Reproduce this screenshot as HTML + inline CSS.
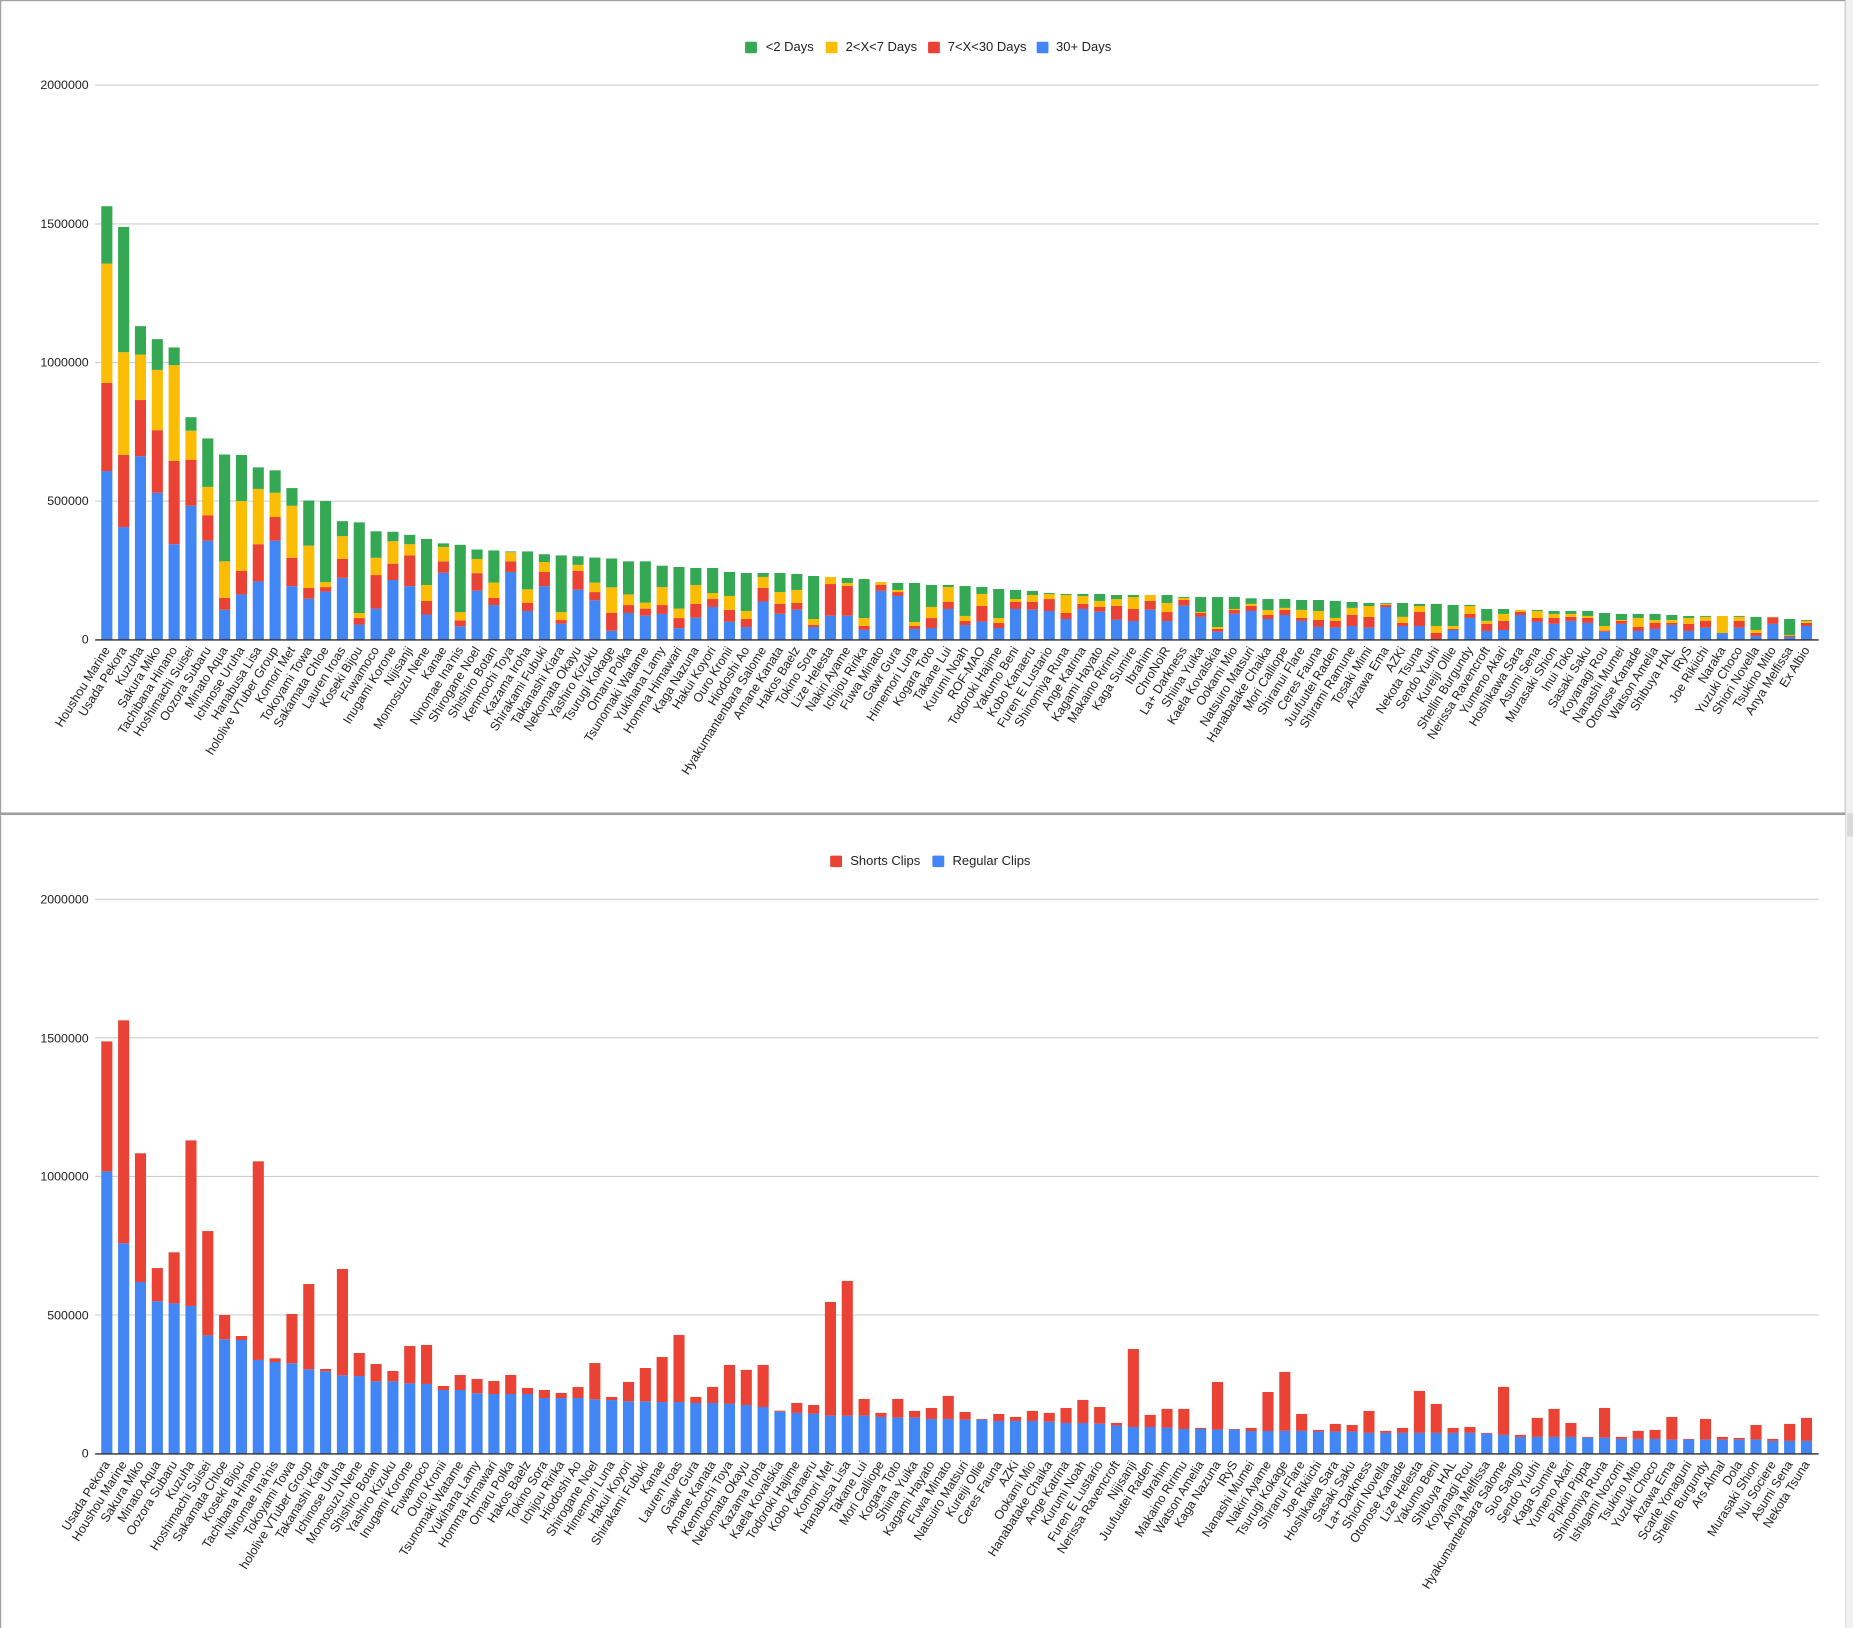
<!DOCTYPE html>
<html><head><meta charset="utf-8">
<style>
html,body{margin:0;padding:0;background:#fff;}
svg{display:block;}
text{font-family:"Liberation Sans",Arial,sans-serif;fill:#222;}
.ax{font-size:10.5px;fill:#444;}
.lg{font-size:11px;fill:#222;}
.xl text{font-size:10.6px;fill:#222;}
</style></head>
<body>
<svg id="s" width="1853" height="1628" viewBox="0 0 1568 1377.6" xmlns="http://www.w3.org/2000/svg">
<rect x="0" y="0" width="1568" height="1377.6" fill="#fff"/>
<rect x="0.5" y="0.5" width="1561" height="688" fill="none" stroke="#a0a0a0" stroke-width="1"/>
<rect x="0" y="687.5" width="1562" height="2.2" fill="#9e9e9e"/>
<rect x="1561.5" y="0" width="6.5" height="1377.6" fill="#f1f1f1"/>
<line x1="1561.8" y1="0" x2="1561.8" y2="1377.6" stroke="#d6d6d6" stroke-width="0.8"/>
<rect x="1563" y="688" width="5" height="20" fill="#dadada"/>
<line x1="0.5" y1="690" x2="0.5" y2="1377.6" stroke="#a0a0a0" stroke-width="1"/>
<g id="grid"></g>
<g id="bars"></g>
<!-- axis labels -->
<g class="ax" text-anchor="end">
<text x="75" y="75.5">2000000</text>
<text x="75" y="193">1500000</text>
<text x="75" y="310">1000000</text>
<text x="75" y="427.5">500000</text>
<text x="75" y="544.5">0</text>
<text x="75" y="764.5">2000000</text>
<text x="75" y="882">1500000</text>
<text x="75" y="999">1000000</text>
<text x="75" y="1116.5">500000</text>
<text x="75" y="1233.5">0</text>
</g>
<!-- legends -->
<g class="lg">
<rect x="630.5" y="35.3" width="10" height="9.8" rx="1" fill="#34a853"/><text x="648" y="43.3">&lt;2 Days</text>
<rect x="698.7" y="35.3" width="10" height="9.8" rx="1" fill="#fbbc04"/><text x="715.6" y="43.3">2&lt;X&lt;7 Days</text>
<rect x="785.3" y="35.3" width="10" height="9.8" rx="1" fill="#ea4335"/><text x="802" y="43.3">7&lt;X&lt;30 Days</text>
<rect x="877.2" y="35.3" width="10" height="9.8" rx="1" fill="#4285f4"/><text x="893.6" y="43.3">30+ Days</text>
<rect x="702.5" y="724" width="10" height="9.8" rx="1" fill="#ea4335"/><text x="719.5" y="732">Shorts Clips</text>
<rect x="789" y="724" width="10" height="9.8" rx="1" fill="#4285f4"/><text x="806" y="732">Regular Clips</text>
</g>
<g class="xl" id="l1" text-anchor="end">
<text>Houshou Marine</text><text>Usada Pekora</text><text>Kuzuha</text><text>Sakura Miko</text><text>Tachibana Hinano</text><text>Hoshimachi Suisei</text><text>Oozora Subaru</text><text>Minato Aqua</text><text>Ichinose Uruha</text><text>Hanabusa Lisa</text><text>hololive VTuber Group</text><text>Komori Met</text><text>Tokoyami Towa</text><text>Sakamata Chloe</text><text>Lauren Iroas</text><text>Koseki Bijou</text><text>Fuwamoco</text><text>Inugami Korone</text><text>Nijisanji</text><text>Momosuzu Nene</text><text>Kanae</text><text>Ninomae Ina'nis</text><text>Shirogane Noel</text><text>Shishiro Botan</text><text>Kenmochi Toya</text><text>Kazama Iroha</text><text>Shirakami Fubuki</text><text>Takanashi Kiara</text><text>Nekomata Okayu</text><text>Yashiro Kizuku</text><text>Tsurugi Kokage</text><text>Omaru Polka</text><text>Tsunomaki Watame</text><text>Yukihana Lamy</text><text>Homma Himawari</text><text>Kaga Nazuna</text><text>Hakui Koyori</text><text>Ouro Kronii</text><text>Hiodoshi Ao</text><text>Hyakumantenbara Salome</text><text>Amane Kanata</text><text>Hakos Baelz</text><text>Tokino Sora</text><text>Lize Helesta</text><text>Nakiri Ayame</text><text>Ichijou Ririka</text><text>Fuwa Minato</text><text>Gawr Gura</text><text>Himemori Luna</text><text>Kogara Toto</text><text>Takane Lui</text><text>Kurumi Noah</text><text>ROF-MAO</text><text>Todoroki Hajime</text><text>Yakumo Beni</text><text>Kobo Kanaeru</text><text>Furen E Lustario</text><text>Shinomiya Runa</text><text>Ange Katrina</text><text>Kagami Hayato</text><text>Makaino Ririmu</text><text>Kaga Sumire</text><text>Ibrahim</text><text>ChroNoiR</text><text>La+ Darkness</text><text>Shiina Yuika</text><text>Kaela Kovalskia</text><text>Ookami Mio</text><text>Natsuiro Matsuri</text><text>Hanabatake Chaika</text><text>Mori Calliope</text><text>Shiranui Flare</text><text>Ceres Fauna</text><text>Juufuutei Raden</text><text>Shirami Ramune</text><text>Tosaki Mimi</text><text>Aizawa Ema</text><text>AZKi</text><text>Nekota Tsuna</text><text>Sendo Yuuhi</text><text>Kureiji Ollie</text><text>Shellin Burgundy</text><text>Nerissa Ravencroft</text><text>Yumeno Akari</text><text>Hoshikawa Sara</text><text>Asumi Sena</text><text>Murasaki Shion</text><text>Inui Toko</text><text>Sasaki Saku</text><text>Koyanagi Rou</text><text>Nanashi Mumei</text><text>Otonose Kanade</text><text>Watson Amelia</text><text>Shibuya HAL</text><text>IRyS</text><text>Joe Rikiichi</text><text>Naraka</text><text>Yuzuki Choco</text><text>Shiori Novella</text><text>Tsukino Mito</text><text>Anya Melfissa</text><text>Ex Albio</text>
</g>
<g class="xl" id="l2" text-anchor="end">
<text>Usada Pekora</text><text>Houshou Marine</text><text>Sakura Miko</text><text>Minato Aqua</text><text>Oozora Subaru</text><text>Kuzuha</text><text>Hoshimachi Suisei</text><text>Sakamata Chloe</text><text>Koseki Bijou</text><text>Tachibana Hinano</text><text>Ninomae Ina'nis</text><text>Tokoyami Towa</text><text>hololive VTuber Group</text><text>Takanashi Kiara</text><text>Ichinose Uruha</text><text>Momosuzu Nene</text><text>Shishiro Botan</text><text>Yashiro Kizuku</text><text>Inugami Korone</text><text>Fuwamoco</text><text>Ouro Kronii</text><text>Tsunomaki Watame</text><text>Yukihana Lamy</text><text>Homma Himawari</text><text>Omaru Polka</text><text>Hakos Baelz</text><text>Tokino Sora</text><text>Ichijou Ririka</text><text>Hiodoshi Ao</text><text>Shirogane Noel</text><text>Himemori Luna</text><text>Hakui Koyori</text><text>Shirakami Fubuki</text><text>Kanae</text><text>Lauren Iroas</text><text>Gawr Gura</text><text>Amane Kanata</text><text>Kenmochi Toya</text><text>Nekomata Okayu</text><text>Kazama Iroha</text><text>Kaela Kovalskia</text><text>Todoroki Hajime</text><text>Kobo Kanaeru</text><text>Komori Met</text><text>Hanabusa Lisa</text><text>Takane Lui</text><text>Mori Calliope</text><text>Kogara Toto</text><text>Shiina Yuika</text><text>Kagami Hayato</text><text>Fuwa Minato</text><text>Natsuiro Matsuri</text><text>Kureiji Ollie</text><text>Ceres Fauna</text><text>AZKi</text><text>Ookami Mio</text><text>Hanabatake Chaika</text><text>Ange Katrina</text><text>Kurumi Noah</text><text>Furen E Lustario</text><text>Nerissa Ravencroft</text><text>Nijisanji</text><text>Juufuutei Raden</text><text>Ibrahim</text><text>Makaino Ririmu</text><text>Watson Amelia</text><text>Kaga Nazuna</text><text>IRyS</text><text>Nanashi Mumei</text><text>Nakiri Ayame</text><text>Tsurugi Kokage</text><text>Shiranui Flare</text><text>Joe Rikiichi</text><text>Hoshikawa Sara</text><text>Sasaki Saku</text><text>La+ Darkness</text><text>Shiori Novella</text><text>Otonose Kanade</text><text>Lize Helesta</text><text>Yakumo Beni</text><text>Shibuya HAL</text><text>Koyanagi Rou</text><text>Anya Melfissa</text><text>Hyakumantenbara Salome</text><text>Suo Sango</text><text>Sendo Yuuhi</text><text>Kaga Sumire</text><text>Yumeno Akari</text><text>Pipkin Pippa</text><text>Shinomiya Runa</text><text>Ishigami Nozomi</text><text>Tsukino Mito</text><text>Yuzuki Choco</text><text>Aizawa Ema</text><text>Scarle Yonaguni</text><text>Shellin Burgundy</text><text>Ars Almal</text><text>Dola</text><text>Murasaki Shion</text><text>Nui Sociere</text><text>Asumi Sena</text><text>Nekota Tsuna</text>
</g>
</svg>
<script>
(function(){
var NS="http://www.w3.org/2000/svg";
var bars=document.getElementById('bars'),grid=document.getElementById('grid');
function r(g,x,y,w,h,f){if(h<=0.05)return;var e=document.createElementNS(NS,'rect');e.setAttribute('x',x);e.setAttribute('y',y);e.setAttribute('width',w);e.setAttribute('height',h);e.setAttribute('fill',f);g.appendChild(e);}
function gl(y,c,w){var e=document.createElementNS(NS,'rect');e.setAttribute('x',80.5);e.setAttribute('y',y-w/2);e.setAttribute('width',1458.5);e.setAttribute('height',w);e.setAttribute('fill',c);grid.appendChild(e);}
[72,189.5,306.8,424,1230-469,1230-351.8,1230-234.5,1230-117.3].forEach(function(y){gl(y,'#cccccc',0.9);});
var X0=90.4,DX=14.24,W=9.4;
var T=[[398.6,324,223,174.5],[446,385,298,192],[386,338.5,300,276],[417,364,313,287],[460.5,390,309,294],[428,389,364.5,353],[457.5,436,412,371],[516,506,475,384.6],[503,483,424,385],[492,460.5,413.7,395.5],[457.5,437.5,417,398],[496,472,428,413],[506.6,497.5,461.7,423.5],[500.6,496.8,492.6,424],[489,473,453.7,441],[528.5,523,518.7,442],[515,486.6,472,449.6],[490.8,477,458,450],[496,470,460.5,452.6],[520,508.5,495,456],[484.7,475,462.8,459.8],[530,525,518,461],[499.8,485,473,465],[512,506,493,465.8],[484,475,467.3,466.6],[517,510,498.7,466.6],[496,484,475.6,469],[527.8,524.7,518,470],[499,483,478,470.7],[508,501,493,471.8],[533.8,518.7,497,472.6],[518.7,512,503,475],[521,515,510,475],[519.5,512,496.8,478.7],[531.5,523,515,479.8],[522.7,511,495,480.6],[513.6,506.9,501.8,480.6],[526,516,504.3,484],[530.6,523.8,517,484.9],[509,497.5,488.2,484.9],[519.3,511,501,484.9],[515.9,510.2,499.2,485.7],[530.6,528.9,523.8,487.4],[521,494.2,488.2,488.2],[521,495.9,493.3,489],[533,529.7,523,490],[500,495,492.5,492.5],[504.3,501,499.2,493.3],[532.2,529.7,526.3,493.3],[531.4,523,513.6,495],[515.3,509.4,496.7,495],[528.9,525.5,521.2,495.9],[526,512.8,502.6,496.7],[531.4,527.2,523,498.4],[515.3,509.4,506.9,499.2],[515.9,509.4,503.5,500],[517,506.9,502.6,501.8],[523.8,518.7,503.5,502.6],[515.3,511,504.3,502.6],[517.6,513.6,508.5,502.6],[524.3,512.8,506.9,503.5],[525.5,515.3,505.2,503.5],[515.9,508.5,503.5,503.5],[525.5,517.9,510.2,503.5],[512.5,507.7,506,505.2],[522,518.7,517.9,505.2],[534.5,532.2,530.6,505.2],[519.3,516.2,515.3,505.2],[517,512.8,511,506.3],[523.8,520.4,516.2,506.9],[520.4,516.1,514.4,506.8],[525.4,522.9,516.1,507.7],[530.5,524.6,517,507.7],[531.1,525.4,522.9,508.5],[529.7,520.4,514.4,509.4],[531.1,522,512.8,510.2],[513.6,511.9,511,510.2],[529.7,527.1,522,510.2],[529.7,517.8,512.8,511],[541.5,535.6,529.7,511],[533.1,532.2,529.7,511.9],[522.9,519.5,512.8,511.9],[533.9,527.9,525.4,515.3],[533.1,525.4,519.5,515.3],[520.4,517.8,516.1,516.1],[526.3,522.9,517,516.1],[527.9,522.9,519.5,517],[525.4,522,519.5,517],[527.1,522.9,521.2,517],[534.5,533.6,529.7,518.7],[527.9,525.4,524.6,519.5],[533.9,530.5,522.9,519.5],[532.2,527.1,524.6,519.5],[528.8,527.1,524.6,520.4],[533.9,527.9,522.9,521.2],[531.1,525.4,522,521.2],[535.6,535.6,521.2,521.2],[531.1,525.4,522,521.2],[538.1,535.6,533.1,522],[527.9,522.5,522.2,522],[539,537.9,537.3,523.8],[529.7,527.1,525.4,524.6]];
var C=['#4285f4','#ea4335','#fbbc04','#34a853'];
var B1=541.5;
T.forEach(function(d,i){var x=X0+i*DX-W/2,prev=B1;for(var k=0;k<4;k++){r(bars,x,d[k],W,prev-d[k],C[k]);prev=d[k];}});
var Bt=[[991.2,881.2],[1052.1,863.4],[1084.8,975.9],[1101.2,1073],[1102.9,1059.7],[1105.1,965],[1130,1041.7],[1133.3,1112.7],[1133.9,1130.5],[1150.8,982.7],[1152.5,1149.4],[1153.6,1111.9],[1158.7,1086.5],[1160.4,1158.4],[1163.8,1073.8],[1164.4,1144.9],[1168.9,1154.2],[1168.9,1160.1],[1170.6,1139],[1171.1,1138.1],[1176.2,1172.8],[1176.2,1163.5],[1179,1166.9],[1179.6,1168.6],[1179.6,1163.5],[1179.6,1174.5],[1183,1176.2],[1183,1178.7],[1183,1173.7],[1184.1,1153.4],[1184.7,1182.1],[1185.8,1169.4],[1185.8,1157.6],[1186.4,1148.3],[1186.4,1129.7],[1187.2,1182.1],[1187.2,1173.6],[1187.7,1155],[1188.9,1159.2],[1190.6,1155],[1194.5,1193.7],[1195.6,1187.2],[1196.2,1188.9],[1197.9,1101.7],[1197.9,1083.9],[1197.9,1183.8],[1199,1195.6],[1199.6,1183.8],[1199.6,1193.9],[1200.7,1191.4],[1200.7,1181.2],[1201.3,1194.8],[1201.3,1200.7],[1202.4,1196.5],[1202.4,1199],[1202.4,1193.9],[1203,1195.6],[1204.1,1191.4],[1204.1,1184.6],[1204.7,1190.6],[1206.3,1204.1],[1207.5,1141.5],[1207.5,1197.3],[1208,1192.2],[1209.2,1192.2],[1209.2,1208.3],[1209.7,1169.4],[1209.7,1209.2],[1210.9,1208.3],[1210.9,1177.9],[1210.8,1160.9],[1210.8,1196.5],[1211.4,1210],[1211.4,1204.9],[1211.4,1205.8],[1212.5,1193.9],[1212.5,1210.8],[1212.5,1208.3],[1212.5,1177],[1212.5,1188],[1212.5,1208.3],[1212.5,1207.5],[1213.1,1212.5],[1214.2,1173.6],[1215.9,1214.2],[1215.9,1199.8],[1215.9,1192.2],[1215.9,1204.1],[1216.5,1215.9],[1216.5,1191.4],[1217.6,1215.9],[1217.6,1210.8],[1217.6,1210],[1218.2,1199],[1218.2,1217.6],[1218.2,1200.7],[1218.2,1215.9],[1218.2,1216.8],[1218.2,1205.8],[1219.3,1217.6],[1219.3,1204.9],[1219.3,1199.8]];
var B2=1230.3;
Bt.forEach(function(d,i){var x=X0+i*DX-W/2;r(bars,x,d[0],W,B2-d[0],C[0]);r(bars,x,d[1],W,d[0]-d[1],C[1]);});
r(bars,80.5,B1-0.6,1458.5,1.2,'#333');
r(bars,80.5,B2-0.6,1458.5,1.2,'#333');
function lab(id,y){var ts=document.getElementById(id).getElementsByTagName('text');for(var i=0;i<ts.length;i++){var x=X0+i*DX+3;ts[i].setAttribute('transform','translate('+x+','+y+') rotate(-58)');}}
lab('l1',550);lab('l2',1239);
})();
</script>
</body></html>
